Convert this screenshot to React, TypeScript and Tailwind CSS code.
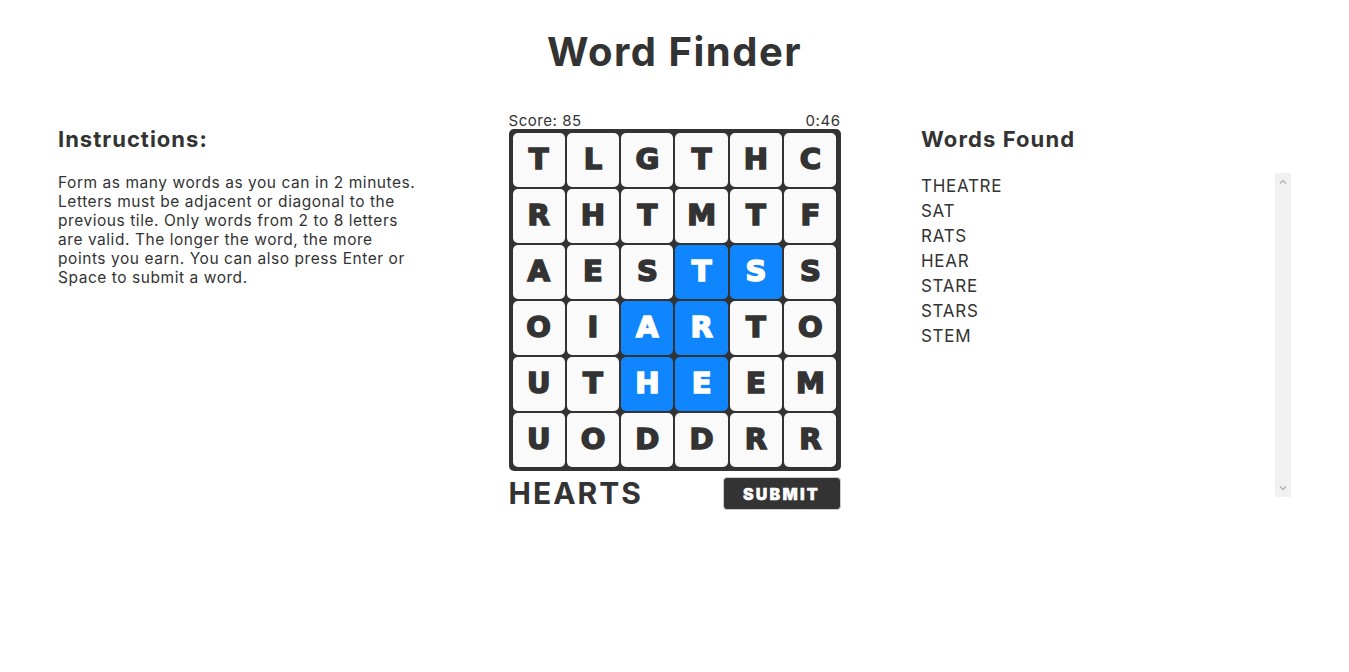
const board = [
    ["T", "L", "G", "T", "H", "C"],
    ["R", "H", "T", "M", "T", "F"],
    ["A", "E", "S", "T", "S", "S"],
    ["O", "I", "A", "R", "T", "O"],
    ["U", "T", "H", "E", "E", "M"],
    ["U", "O", "D", "D", "R", "R"],
]

// cells that are part of the current word
const selected = ["2-3", "2-4", "3-2", "3-3", "4-2", "4-3"]

const wordsFound = ["THEATRE", "SAT", "RATS", "HEAR", "STARE", "STARS", "STEM"]

const font = "font-['Inter','Open_Sans',sans-serif]"

function Tile({ letter, active }: { letter: string; active: boolean }) {
    return (
        <div
            className={
                "h-[54px] rounded-[5px] flex items-center justify-center text-[29px] font-black font-['DejaVu_Sans',sans-serif] [-webkit-text-stroke:1.6px_currentColor] " +
                (active ? "bg-[#0f86fd] text-white" : "bg-[#fafafa] text-[#333]")
            }
        >
            {letter}
        </div>
    )
}

function Chevron({ up }: { up?: boolean }) {
    return (
        <svg width="8" height="5" viewBox="0 0 8 5" className="mx-auto">
            <path
                d={up ? "M1 4.5 L4 1.5 L7 4.5" : "M1 0.5 L4 3.5 L7 0.5"}
                fill="none"
                stroke="#b5b5b5"
                strokeWidth="1.5"
            />
        </svg>
    )
}

export default function App() {
    return (
        <div className={`w-full min-h-[672px] bg-white text-[#333] ${font}`}>
            <h1 className="pt-[28px] text-center text-[40px] leading-[48px] font-bold tracking-[1.5px]">
                Word Finder
            </h1>

            <div className="mt-[36px] flex items-start justify-between px-[58px]">
                <div className="w-[370px]">
                    <h2 className="mt-[13px] text-[22px] leading-[28px] font-bold tracking-[1px]">
                        Instructions:
                    </h2>
                    <p className="mt-[20px] w-[362px] text-[15.5px] leading-[19px] tracking-[0.55px]">
                        Form as many words as you can in 2 minutes. Letters
                        must be adjacent or diagonal to the previous tile. Only
                        words from 2 to 8 letters are valid. The longer the
                        word, the more points you earn. You can also press
                        Enter or Space to submit a word.
                    </p>
                </div>

                <div className="w-[332px]">
                    <div className="flex justify-between text-[15px] leading-[17px] tracking-[0.55px]">
                        <span>Score: 85</span>
                        <span>0:46</span>
                    </div>
                    <div className="grid grid-cols-6 gap-[2px] rounded-[5px] bg-[#333] p-[4px]">
                        {board.map((row, r) =>
                            row.map((letter, c) => (
                                <Tile
                                    key={`${r}-${c}`}
                                    letter={letter}
                                    active={selected.includes(`${r}-${c}`)}
                                />
                            )),
                        )}
                    </div>
                    <div className="mt-[6px] flex items-center justify-between">
                        <span className="text-[30px] leading-[33px] font-bold tracking-[2px]">
                            HEARTS
                        </span>
                        <button className="h-[33px] w-[118px] rounded-[4px] border border-[#ccc] bg-[#333] text-[16px] font-black tracking-[2.2px] text-white [-webkit-text-stroke:0.4px_white]">
                            SUBMIT
                        </button>
                    </div>
                </div>

                <div className="w-[370px]">
                    <h2 className="mt-[13px] text-[22px] leading-[28px] font-bold tracking-[1.1px]">
                        Words Found
                    </h2>
                    <div className="mt-[20px] flex h-[324px]">
                        <ul className="flex-1 overflow-hidden pt-[1px] text-[17px] leading-[25px] tracking-[0.7px]">
                            {wordsFound.map((w) => (
                                <li key={w}>{w}</li>
                            ))}
                        </ul>
                        <div className="flex w-[16px] flex-col justify-between bg-[#f1f1f1] py-[6px]">
                            <Chevron up />
                            <Chevron />
                        </div>
                    </div>
                </div>
            </div>
        </div>
    )
}
